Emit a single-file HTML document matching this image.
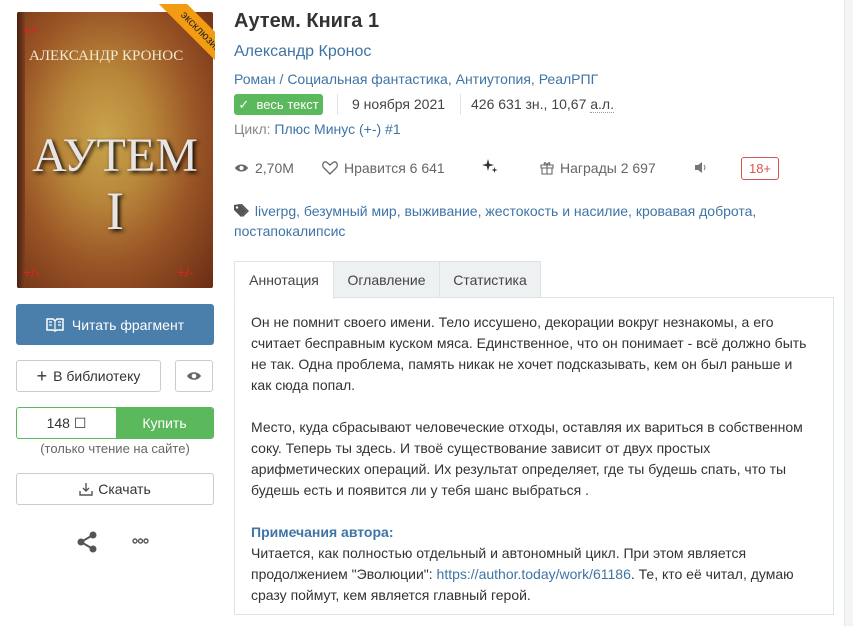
<!DOCTYPE html>
<html><head><meta charset="utf-8"><style>
*{box-sizing:border-box;margin:0;padding:0}
body{width:853px;height:626px;overflow:hidden;background:#fff;font-family:"Liberation Sans","DejaVu Sans",sans-serif;color:#333;position:relative;font-size:14px}
.a{position:absolute}
a{color:#3f74a6;text-decoration:none}
.btn{position:absolute;border:1px solid #ccc;border-radius:3px;background:#fff;display:flex;align-items:center;justify-content:center;font-size:14px;color:#333}
.g{color:#666}
.tab{position:absolute;top:261px;height:37px;border:1px solid #dde2e4;background:#eef1f2;display:flex;align-items:center;justify-content:center;font-size:14px;color:#444}
p{line-height:21px}
</style></head><body>
<div class="a" style="right:0;top:0;width:9px;height:626px;background:#f2f4f5;border-left:1px solid #e6e9eb"></div>
<!-- cover -->
<div class="a" style="left:17px;top:12px;width:196px;height:276px;border-radius:2px;overflow:hidden;background:radial-gradient(ellipse at 45% 45%,#c9a44c 0%,#b8863a 30%,#9a5526 60%,#6a2c14 100%)">
<div class="a" style="left:0;top:0;width:8px;height:276px;background:linear-gradient(90deg,#4a2010,#7a4020)"></div>
<div class="a" style="left:6px;top:10px;color:#d22;font-size:14px">+/-</div>
<div class="a" style="left:6px;top:252px;color:#d22;font-size:14px">+/-</div>
<div class="a" style="left:160px;top:252px;color:#d22;font-size:14px">+/-</div>
<div class="a" style="left:12px;top:36px;color:#f1ead0;font-size:15px;font-family:'Liberation Serif',serif">АЛЕКСАНДР КРОНОС</div>
<div class="a" style="left:0;width:196px;top:116px;text-align:center;color:#e8e4e4;font-size:48px;font-family:'Liberation Serif',serif;text-shadow:2px 2px 4px #000">АУТЕМ</div>
<div class="a" style="left:0;width:196px;top:168px;text-align:center;color:#e8e4e4;font-size:54px;font-family:'Liberation Serif',serif;text-shadow:2px 2px 4px #000">I</div>
</div>
<div class="a" style="left:213px;top:0;width:40px;height:80px;background:#fff"></div>
<div class="a" style="left:146px;top:22px;width:110px;height:20px;background:#f39c12;transform:rotate(45deg);text-align:center;font-size:11px;line-height:20px;color:#222">эксклюзив</div>
<div class="a" style="left:215px;top:0;width:40px;height:90px;background:#fff"></div>
<div class="a" style="left:140px;top:0;width:120px;height:4px;background:#fff"></div>
<!-- left buttons -->
<div class="a" style="left:16px;top:304px;width:198px;height:41px;background:#4a7eab;border-radius:3px;color:#fff;display:flex;align-items:center;justify-content:center;font-size:14px">
<svg width="18" height="14" viewBox="0 0 18 14" style="margin-right:8px"><path d="M1 1h6l2 2 2-2h6v11h-6l-2 1-2-1H1z" fill="none" stroke="#fff" stroke-width="1.5"/><path d="M9 3v10M3 4h3M3 7h3M12 4h3M12 7h3" stroke="#fff" stroke-width="1.2"/></svg>Читать фрагмент</div>
<div class="btn" style="left:16px;top:360px;width:145px;height:32px"><span style="font-size:18px;margin-right:6px">+</span>В библиотеку</div>
<div class="btn" style="left:175px;top:360px;width:38px;height:32px"><svg width="16" height="10" viewBox="0 0 16 10"><path d="M1 5C4 0 12 0 15 5C12 10 4 10 1 5z" fill="#666"/><circle cx="8" cy="5" r="2.3" fill="#fff"/></svg></div>
<div class="a" style="left:16px;top:407px;width:198px;height:32px;border:1px solid #5cb85c;border-radius:3px;overflow:hidden;display:flex">
<div style="width:99px;display:flex;align-items:center;justify-content:center;font-size:14px">148 ☐</div>
<div style="flex:1;background:#5cb85c;color:#fff;display:flex;align-items:center;justify-content:center;font-size:14px">Купить</div></div>
<div class="a g" style="left:16px;width:198px;top:441px;text-align:center;font-size:13px">(только чтение на сайте)</div>
<div class="btn" style="left:16px;top:473px;width:198px;height:32px"><svg width="14" height="14" viewBox="0 0 14 14" style="margin-right:5px"><path d="M7 1v8M4 6l3 3 3-3M1 9v4h12V9" fill="none" stroke="#555" stroke-width="1.4"/></svg>Скачать</div>
<svg class="a" style="left:76px;top:531px" width="22" height="22" viewBox="0 0 22 22"><circle cx="17" cy="4" r="3.5" fill="#555"/><circle cx="5" cy="11" r="3.5" fill="#555"/><circle cx="17" cy="18" r="3.5" fill="#555"/><path d="M17 4L5 11L17 18" stroke="#555" stroke-width="2" fill="none"/></svg>
<svg class="a" style="left:132px;top:538px" width="17" height="6" viewBox="0 0 17 6"><circle cx="3" cy="3" r="2" fill="none" stroke="#555" stroke-width="1.4"/><circle cx="8.5" cy="3" r="2" fill="none" stroke="#555" stroke-width="1.4"/><circle cx="14" cy="3" r="2" fill="none" stroke="#555" stroke-width="1.4"/></svg>
<!-- right -->
<div class="a" style="left:234px;top:10px;font-size:20px;font-weight:bold;color:#333">Аутем. Книга 1</div>
<div class="a" style="left:234px;top:43px;font-size:16px"><a>Александр Кронос</a></div>
<div class="a" style="left:234px;top:71px;font-size:14px"><a>Роман / Социальная фантастика, Антиутопия, РеалРПГ</a></div>
<div class="a" style="left:234px;top:94px;width:89px;height:21px;background:#5cb85c;border-radius:3px;color:#fff;font-size:13px;display:flex;align-items:center;justify-content:center">✓&nbsp; весь текст</div>
<div class="a" style="left:337px;top:94px;width:1px;height:21px;background:#e3e3e3"></div>
<div class="a" style="left:352px;top:96px;font-size:14px;color:#444">9 ноября 2021</div>
<div class="a" style="left:460px;top:94px;width:1px;height:21px;background:#e3e3e3"></div>
<div class="a" style="left:471px;top:96px;font-size:14px;color:#444">426 631 зн., 10,67 <span style="border-bottom:1px dotted #999">а.л.</span></div>
<div class="a g" style="left:234px;top:121px;font-size:14px;color:#888">Цикл: <a>Плюс Минус (+-) #1</a></div>
<div class="a g" style="left:234px;top:160px;font-size:14px;display:flex;align-items:center"><svg width="15" height="10" viewBox="0 0 16 10" style="margin-right:6px"><path d="M1 5C4 0 12 0 15 5C12 10 4 10 1 5z" fill="#666"/><circle cx="8" cy="5" r="2.3" fill="#fff"/></svg>2,70M</div>
<div class="a g" style="left:322px;top:160px;font-size:14px;display:flex;align-items:center"><svg width="16" height="14" viewBox="0 0 16 14" style="margin-right:6px"><path d="M8 13L2 7C-1 4 2-1 5 1.5L8 4L11 1.5C14-1 17 4 14 7z" fill="none" stroke="#666" stroke-width="1.3"/></svg>Нравится 6 641</div>
<svg class="a" style="left:482px;top:158px" width="16" height="16" viewBox="0 0 16 16"><path d="M6 1L7.3 5.7 12 7 7.3 8.3 6 13 4.7 8.3 0 7 4.7 5.7z" fill="#333"/><path d="M12.5 9L13.2 11.3 15.5 12 13.2 12.7 12.5 15 11.8 12.7 9.5 12 11.8 11.3z" fill="#333"/></svg>
<div class="a g" style="left:540px;top:160px;font-size:14px;display:flex;align-items:center"><svg width="14" height="14" viewBox="0 0 14 14" style="margin-right:6px"><path d="M1 4h12v3H1zM2 7h10v6H2zM7 4v9M7 4C5 0 3 2 5 4M7 4C9 0 11 2 9 4" fill="none" stroke="#666" stroke-width="1.1"/></svg>Награды 2 697</div>
<svg class="a" style="left:695px;top:162px" width="12" height="11" viewBox="0 0 12 11"><path d="M0 3h3l4-3v11L3 8H0z" fill="#777"/><path d="M9 3q2 2.5 0 5" stroke="#777" fill="none"/></svg>
<div class="a" style="left:741px;top:157px;width:38px;height:23px;border:1px solid #d9534f;border-radius:3px;color:#d9534f;font-size:13px;display:flex;align-items:center;justify-content:center">18+</div>
<div class="a" style="left:234px;top:201px;font-size:14px;line-height:20px;width:560px"><svg width="17" height="13" viewBox="0 0 17 13" style="vertical-align:-1px"><path d="M0 1v5l7 7 6-6-7-7zM4 1l7 7" fill="#555"/><path d="M6 0h2l7 7-6 6-1-1 5-5z" fill="#555"/><circle cx="3" cy="3.5" r="1.2" fill="#fff"/></svg> <a>liverpg, безумный мир, выживание, жестокость и насилие, кровавая доброта, постапокалипсис</a></div>
<div class="a" style="left:234px;top:297px;width:600px;height:318px;border:1px solid #dde2e4"></div>
<div class="tab" style="left:234px;width:100px;background:#fff;border-bottom-color:#fff;height:38px">Аннотация</div>
<div class="tab" style="left:333px;width:107px">Оглавление</div>
<div class="tab" style="left:439px;width:102px">Статистика</div>
<div class="a" style="left:251px;top:312px;width:560px;font-size:14px;color:#333">
<p>Он не помнит своего имени. Тело иссушено, декорации вокруг незнакомы, а его считает бесправным куском мяса. Единственное, что он понимает - всё должно быть не так. Одна проблема, память никак не хочет подсказывать, кем он был раньше и как сюда попал.</p>
<p>&nbsp;</p>
<p>Место, куда сбрасывают человеческие отходы, оставляя их вариться в собственном соку. Теперь ты здесь. И твоё существование зависит от двух простых арифметических операций. Их результат определяет, где ты будешь спать, что ты будешь есть и появится ли у тебя шанс выбраться .</p>
<p>&nbsp;</p>
<p style="color:#3f74a6;font-weight:bold">Примечания автора:</p>
<p>Читается, как полностью отдельный и автономный цикл. При этом является продолжением "Эволюции": <a>https://author.today/work/61186</a>. Те, кто её читал, думаю сразу поймут, кем является главный герой.</p>
</div>
</body></html>
